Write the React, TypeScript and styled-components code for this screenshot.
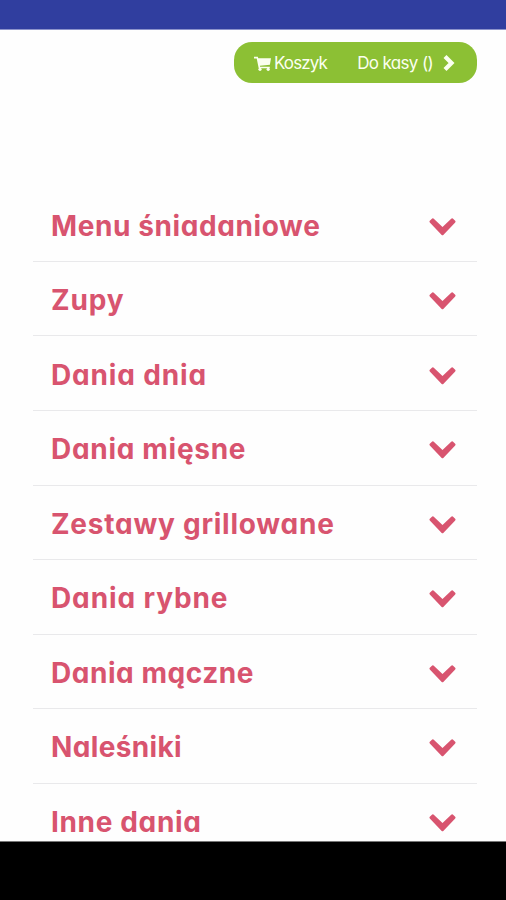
import React from 'react';
import styled, { createGlobalStyle } from 'styled-components';

const GlobalStyle = createGlobalStyle`
  * { box-sizing: border-box; }
  body { margin: 0; background: #fefefe; font-family: Inter, Lato, sans-serif; font-feature-settings: "cv11" 1; }
`;

const Screen = styled.div`
  display: flex;
  flex-direction: column;
  width: 506px;
  height: 900px;
  overflow: hidden;
  background: #fefefe;
`;

const StatusBar = styled.div`
  flex: none;
  height: 30px;
  background: #303e9f;
  border-bottom: 1px solid #8c93cb;
`;

const Content = styled.main`
  flex: 1;
  min-height: 0;
  overflow: hidden;
  padding: 12px 29px 0 33px;
`;

const CartBar = styled.nav`
  display: flex;
  align-items: center;
  width: 243px;
  height: 41px;
  margin-left: auto;
  padding: 0 22px 0 20px;
  border-radius: 18px;
  background: #8cc034;
  color: #fbfff0;
`;

const CartLink = styled.a<{ $spacing: number }>`
  display: flex;
  align-items: center;
  font-size: 17px;
  line-height: 24px;
  letter-spacing: ${(p) => p.$spacing}px;
  white-space: nowrap;
`;

const CheckoutLink = styled(CartLink)`
  margin-left: auto;
  gap: 10px;
`;

const CartSvg = styled.svg`
  display: block;
  margin: 2px 3px 0 0;
`;

const Menu = styled.ul`
  list-style: none;
  margin: 104.4px 0 0;
  padding: 0;
`;

const MenuRow = styled.li`
  display: flex;
  align-items: center;
  justify-content: space-between;
  height: 74.55px;
  padding: 3px 21px 0 18px;
  border-bottom: 1px solid #e9e9eb;
  color: #d8546f;
`;

const Label = styled.span<{ $spacing: number }>`
  font-size: 28px;
  font-weight: 700;
  line-height: 36px;
  letter-spacing: ${(p) => p.$spacing}px;
  white-space: nowrap;
`;

const RowChevron = styled.svg`
  display: block;
  margin-top: 2px;
`;

const NavigationBar = styled.div`
  flex: none;
  height: 59px;
  background: #000;
  border-top: 1px solid #777;
`;

const CartIcon = () => (
  <CartSvg width="17" height="15" viewBox="0 0 17 15" fill="currentColor">
    <path d="M0 .8h3.8l.5 1.5H17l-1.1 6.4-10 1.1.2.9h9.7v1.5H4.7L2.7 2.4H0z" />
    <circle cx="6" cy="13.3" r="1.6" />
    <circle cx="14.2" cy="13.3" r="1.6" />
  </CartSvg>
);

const ChevronRight = () => (
  <svg width="12" height="18" viewBox="0 0 12 18" fill="none" stroke="currentColor" strokeWidth="4.2">
    <path d="M2 2.5 8.5 9 2 15.5" />
  </svg>
);

const ChevronDown = () => (
  <RowChevron width="27" height="18" viewBox="0 0 27 18" fill="currentColor">
    <path d="M3.2 .6.8 2.8Q0 3.6.8 4.4L12.7 16.9Q13.5 17.7 14.3 16.9L26.2 4.4Q27 3.6 26.2 2.8L23.8 .6Q23 0 22.2.7L13.5 9 4.8.7Q4 0 3.2.6Z" />
  </RowChevron>
);

const categories = [
  { name: 'Menu śniadaniowe', spacing: 0.6 },
  { name: 'Zupy', spacing: 0.85 },
  { name: 'Dania dnia', spacing: 0.85 },
  { name: 'Dania mięsne', spacing: 0.7 },
  { name: 'Zestawy grillowane', spacing: 0.76 },
  { name: 'Dania rybne', spacing: 0.88 },
  { name: 'Dania mączne', spacing: 0.55 },
  { name: 'Naleśniki', spacing: 0.35 },
  { name: 'Inne dania', spacing: 0.65 },
];

export default function App() {
  return (
    <Screen>
      <GlobalStyle />
      <StatusBar />
      <Content>
        <CartBar>
          <CartLink $spacing={-0.9}>
            <CartIcon />
            Koszyk
          </CartLink>
          <CheckoutLink $spacing={-0.65}>
            Do kasy ()
            <ChevronRight />
          </CheckoutLink>
        </CartBar>
        <Menu>
          {categories.map(({ name, spacing }) => (
            <MenuRow key={name}>
              <Label $spacing={spacing}>{name}</Label>
              <ChevronDown />
            </MenuRow>
          ))}
        </Menu>
      </Content>
      <NavigationBar />
    </Screen>
  );
}
